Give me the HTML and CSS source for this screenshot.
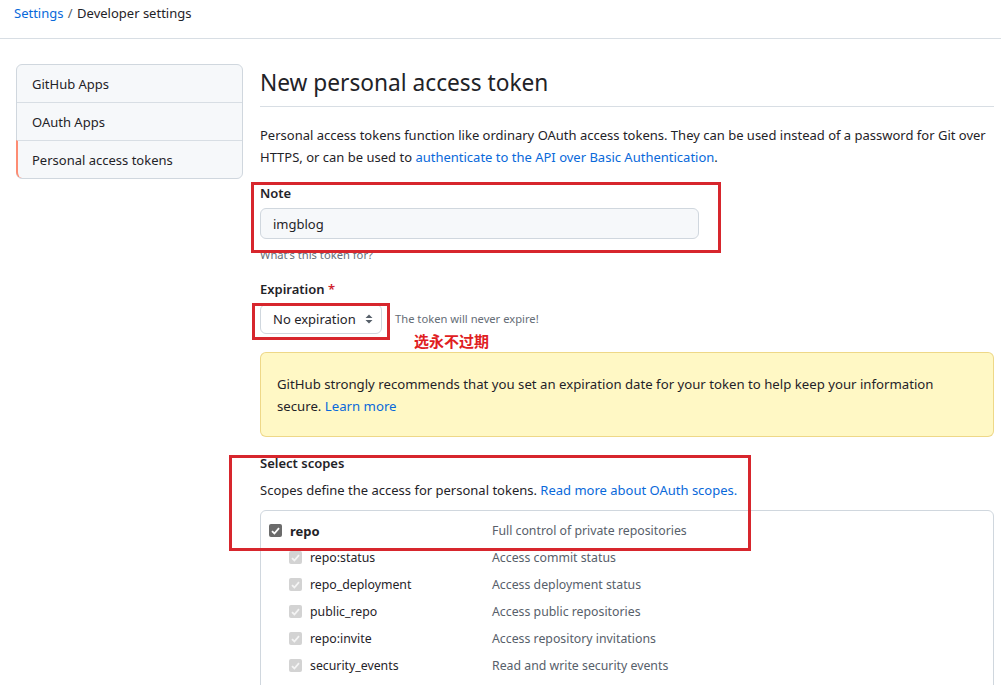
FILE: index.html
```html
<!DOCTYPE html>
<html lang="en">
<head>
  <meta charset="UTF-8">
  <title>New personal access token</title>
  <link rel="stylesheet" href="styles.css">
</head>
<body>
  <div id="page">
    <div id="breadcrumb">
      <a href="#">Settings</a> <span class="sep">/</span> Developer settings
    </div>

    <div id="layout">
      <ul id="sidebar">
        <li class="nav-item"><a href="#">GitHub Apps</a></li>
        <li class="nav-item"><a href="#">OAuth Apps</a></li>
        <li class="nav-item selected"><a href="#">Personal access tokens</a></li>
      </ul>

      <div id="main">
        <h2 class="title">New personal access token</h2>
        <p class="intro">Personal access tokens function like ordinary OAuth access tokens. They can be used instead of a password for Git over HTTPS, or can be used to <a href="#">authenticate to the API over Basic Authentication</a>.</p>

        <div class="field note-field">
          <label class="field-label">Note</label>
          <input class="text-input" type="text" value="imgblog">
          <p class="hint">What’s this token for?</p>
        </div>

        <div class="field expiration-field">
          <label class="field-label">Expiration <span class="required">*</span></label>
          <div class="expiration-row">
            <div class="select">No expiration
              <svg class="select-arrows" width="8" height="10" viewBox="0 0 8 10"><path d="M4 0.5 L7.5 4 H0.5 Z M4 9.5 L7.5 6 H0.5 Z" fill="#57606a"/></svg>
            </div>
            <span class="hint inline">The token will never expire!</span>
          </div>
          <div class="annotation">选永不过期</div>
        </div>

        <div class="flash">
          GitHub strongly recommends that you set an expiration date for your token to help keep your information secure. <a href="#">Learn more</a>
        </div>

        <h3 class="scopes-title">Select scopes</h3>
        <p class="scopes-desc">Scopes define the access for personal tokens. <a href="#">Read more about OAuth scopes.</a></p>

        <div class="scopes">
          <div class="scope-row parent">
            <span class="scope-name"><span class="checkbox checked"><svg width="9" height="8" viewBox="0 0 9 8"><path d="M1 4.2 L3.4 6.5 L8 1.2" fill="none" stroke="#fff" stroke-width="1.8"/></svg></span><b>repo</b></span>
            <span class="scope-desc">Full control of private repositories</span>
          </div>
          <div class="scope-row child">
            <span class="scope-name"><span class="checkbox disabled"><svg width="9" height="8" viewBox="0 0 9 8"><path d="M1 4.2 L3.4 6.5 L8 1.2" fill="none" stroke="#f4f4f4" stroke-width="1.8"/></svg></span>repo:status</span>
            <span class="scope-desc">Access commit status</span>
          </div>
          <div class="scope-row child">
            <span class="scope-name"><span class="checkbox disabled"><svg width="9" height="8" viewBox="0 0 9 8"><path d="M1 4.2 L3.4 6.5 L8 1.2" fill="none" stroke="#f4f4f4" stroke-width="1.8"/></svg></span>repo_deployment</span>
            <span class="scope-desc">Access deployment status</span>
          </div>
          <div class="scope-row child">
            <span class="scope-name"><span class="checkbox disabled"><svg width="9" height="8" viewBox="0 0 9 8"><path d="M1 4.2 L3.4 6.5 L8 1.2" fill="none" stroke="#f4f4f4" stroke-width="1.8"/></svg></span>public_repo</span>
            <span class="scope-desc">Access public repositories</span>
          </div>
          <div class="scope-row child">
            <span class="scope-name"><span class="checkbox disabled"><svg width="9" height="8" viewBox="0 0 9 8"><path d="M1 4.2 L3.4 6.5 L8 1.2" fill="none" stroke="#f4f4f4" stroke-width="1.8"/></svg></span>repo:invite</span>
            <span class="scope-desc">Access repository invitations</span>
          </div>
          <div class="scope-row child">
            <span class="scope-name"><span class="checkbox disabled"><svg width="9" height="8" viewBox="0 0 9 8"><path d="M1 4.2 L3.4 6.5 L8 1.2" fill="none" stroke="#f4f4f4" stroke-width="1.8"/></svg></span>security_events</span>
            <span class="scope-desc">Read and write security events</span>
          </div>
        </div>
      </div>
    </div>

    <!-- red annotation boxes drawn over the screenshot -->
    <div class="mark mark-note"></div>
    <div class="mark mark-expiration"></div>
    <div class="mark mark-scopes"></div>
  </div>
</body>
</html>
```

FILE: styles.css
```css
body {
    font-family: "Noto Sans", "Noto Sans CJK SC", sans-serif;
    font-size: 13px;
    color: #1f2328;
    margin: 0;
    padding: 0;
    background-color: #ffffff;
}

a {
    color: #0969da;
    text-decoration: none;
}

#page {
    position: relative;
    height: 685px;
    overflow: hidden;
}

#breadcrumb {
    height: 39px;
    box-sizing: border-box;
    padding: 2px 14px 0;
    line-height: 22px;
    font-size: 13px;
    border-bottom: 1px solid #d8dee4;
}

#breadcrumb .sep {
    color: #57606a;
    margin: 0 1px;
}

#layout {
    display: flex;
    gap: 17px;
    padding: 25px 7px 0 16px;
}

#sidebar {
    list-style: none;
    margin: 0;
    padding: 0;
    width: 227px;
    flex-shrink: 0;
    align-self: flex-start;
    background-color: #f6f8fa;
    border: 1px solid #d0d7de;
    border-radius: 6px;
    box-sizing: border-box;
}

.nav-item {
    height: 38px;
    display: flex;
    align-items: center;
    padding-left: 15px;
    border-top: 1px solid #d8dee4;
    box-sizing: border-box;
}

.nav-item:first-child {
    border-top: none;
    height: 37px;
}

.nav-item a {
    color: #1f2328;
}

.nav-item.selected {
    border-left: 2px solid #fd8c73;
    padding-left: 14px;
    margin-left: -1px;
    border-bottom-left-radius: 6px;
}

#main {
    flex-grow: 1;
    min-width: 0;
}

.title {
    font-size: 22.7px;
    font-weight: 400;
    margin: 4px 0 0;
    line-height: 30px;
    padding-bottom: 8px;
    border-bottom: 1px solid #d8dee4;
}

.intro {
    margin: 17px 0 0;
    line-height: 22px;
}

.field-label {
    display: block;
    font-weight: 600;
    line-height: 20px;
}

.note-field {
    margin-top: 15px;
}

.text-input {
    display: block;
    margin-top: 5px;
    width: 439px;
    height: 31px;
    box-sizing: border-box;
    background-color: #f6f8fa;
    border: 1px solid #d0d7de;
    border-radius: 6px;
    padding: 0 12px;
    font-family: inherit;
    font-size: 13px;
    color: #1f2328;
}

.hint {
    font-size: 11.2px;
    color: #656d76;
    margin: 7px 0 0;
    line-height: 18px;
}

.hint.inline {
    margin: 0;
}

.expiration-field {
    margin-top: 15px;
}

.required {
    color: #cf222e;
}

.expiration-row {
    display: flex;
    align-items: center;
    gap: 13px;
    margin-top: 5px;
}

.select {
    width: 122px;
    height: 30px;
    box-sizing: border-box;
    border: 1px solid #d0d7de;
    border-radius: 6px;
    display: flex;
    align-items: center;
    justify-content: space-between;
    padding: 0 8px 0 12px;
    background-color: #ffffff;
}

.annotation {
    color: #e0201f;
    font-weight: 700;
    font-size: 15px;
    line-height: 16px;
    margin: -1px 0 0 154px;
}

.flash {
    margin-top: 3px;
    background-color: #fff8c5;
    border: 1px solid rgba(212, 167, 44, 0.4);
    border-radius: 6px;
    padding: 20px 40px 19px 16px;
    line-height: 22px;
    font-size: 13.2px;
}

.scopes-title {
    font-size: 13px;
    font-weight: 600;
    margin: 16px 0 0;
    line-height: 20px;
}

.scopes-desc {
    margin: 7px 0 0;
    line-height: 20px;
}

.scopes {
    margin-top: 10px;
    border: 1px solid #d0d7de;
    border-radius: 6px;
    padding: 6px 0 20px;
    font-size: 12.3px;
}

.scope-row {
    display: flex;
    align-items: center;
    height: 27px;
}

.scope-row.parent {
    padding-left: 8px;
    font-size: 13px;
}

.scope-row.parent .scope-desc {
    font-size: 12.3px;
}

.scope-row.child {
    padding-left: 28px;
}

.scope-name {
    display: flex;
    align-items: center;
    gap: 8px;
    width: 223px;
}

.scope-row.child .scope-name {
    width: 203px;
    gap: 8px;
}

.scope-desc {
    color: #57606a;
}

.checkbox {
    width: 13px;
    height: 13px;
    border-radius: 2px;
    display: inline-flex;
    align-items: center;
    justify-content: center;
    flex-shrink: 0;
}

.checkbox.checked {
    background-color: #6b6b6b;
}

.checkbox.disabled {
    background-color: #d3d3d3;
}

.mark {
    position: absolute;
    border: 3px solid #d7262d;
    box-sizing: border-box;
}

.mark-note {
    left: 251px;
    top: 182px;
    width: 470px;
    height: 71px;
}

.mark-expiration {
    left: 252px;
    top: 303px;
    width: 138px;
    height: 37px;
}

.mark-scopes {
    left: 229px;
    top: 455px;
    width: 522px;
    height: 96px;
}
```
